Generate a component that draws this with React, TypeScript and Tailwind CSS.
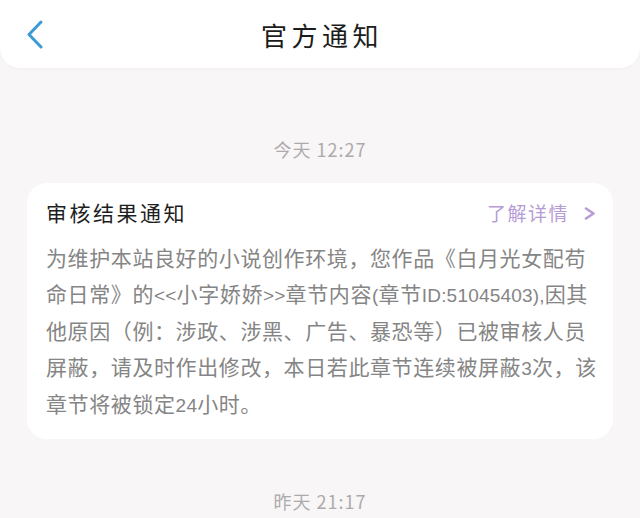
import React from "react";

const cjk = { fontFamily: '"Noto Sans CJK SC", "Noto Sans", sans-serif' };

const BackIcon = () => (
    <svg width="17" height="29" viewBox="0 0 17 29" fill="none">
        <path d="M15 2 L3 14.5 L15 27" stroke="#3d9ad6" strokeWidth="3" strokeLinecap="round" strokeLinejoin="round" />
    </svg>
);

const MoreIcon = () => (
    <svg width="12" height="13" viewBox="0 0 12 13" fill="none">
        <path d="M2 1.5 L9.5 6.5 L2 11.5" stroke="#b69bd6" strokeWidth="2.6" strokeLinecap="round" strokeLinejoin="round" />
    </svg>
);

const Stamp = ({ text, className }: { text: string; className: string }) => (
    <div className={`text-center text-[18px] leading-[24px] tracking-[1px] text-[#aeaaac] ${className}`}>{text}</div>
);

// latin runs are narrower in the reference
const Lat = ({ children }: { children: React.ReactNode }) => (
    <span className="font-['Liberation_Sans',sans-serif] text-[19px] tracking-[0.2px]">{children}</span>
);

export default function App() {
    return (
        <div className="min-h-[518px] w-[640px] overflow-hidden bg-[#f8f6f7]" style={cjk}>
            {/* Header */}
            <div className="relative flex h-[68px] items-center justify-center rounded-b-[20px] bg-white shadow-[0_1px_3px_rgba(0,0,0,0.03)]">
                <div className="absolute left-[26px] top-[20px]">
                    <BackIcon />
                </div>
                <h1 className="pl-[4px] text-[26px] font-normal tracking-[4.5px] text-[#1c1c1c]">官方通知</h1>
            </div>

            <Stamp text="今天 12:27" className="mt-[69px]" />

            {/* Card */}
            <div className="mx-[27px] mt-[22px] rounded-[20px] bg-white pb-[15px] pl-[19px] pr-[17px] pt-[15px]">
                <div className="flex h-[30px] items-center justify-between">
                    <span className="text-[21px] tracking-[2.5px] text-[#1e1e1e]">审核结果通知</span>
                    <span className="flex items-center gap-[15px] text-[19px] tracking-[1.5px] text-[#b69bd6]">
                        了解详情
                        <MoreIcon />
                    </span>
                </div>
                <div className="mt-[12px] whitespace-nowrap text-[21px] leading-[35.5px] tracking-[0.6px] text-[#858585]">
                    <div>为维护本站良好的小说创作环境，您作品《白月光女配苟</div>
                    <div>
                        命日常》的<Lat>&lt;&lt;</Lat>小字娇娇<Lat>&gt;&gt;</Lat>章节内容<Lat>(</Lat>章节<Lat>ID:51045403),</Lat>因其
                    </div>
                    <div>他原因（例：涉政、涉黑、广告、暴恐等）已被审核人员</div>
                    <div>
                        屏蔽，请及时作出修改，本日若此章节连续被屏蔽<Lat>3</Lat>次，该
                    </div>
                    <div>
                        章节将被锁定<Lat>24</Lat>小时。
                    </div>
                </div>
            </div>

            <Stamp text="昨天 21:17" className="mt-[50px]" />
        </div>
    );
}
